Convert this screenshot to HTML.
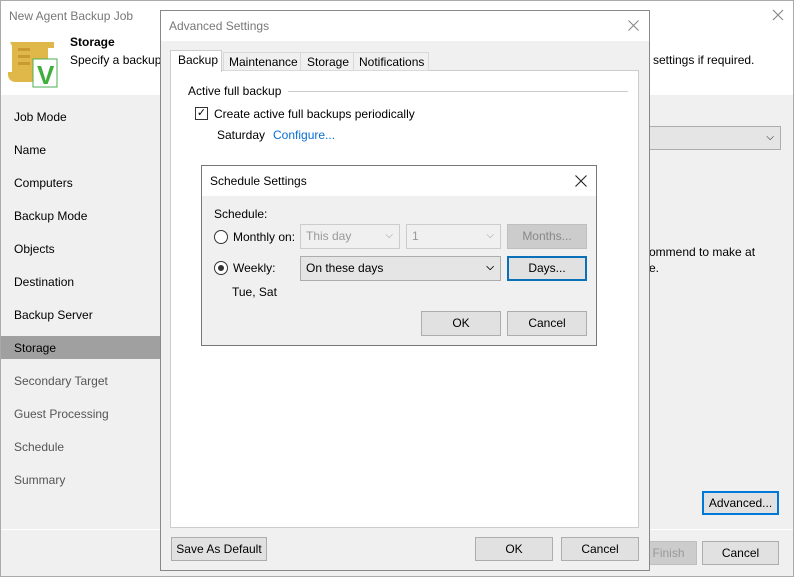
<!DOCTYPE html><html><head><style>
*{box-sizing:border-box;margin:0;padding:0}
body{width:794px;height:577px;position:relative;overflow:hidden;font-family:"Liberation Sans",sans-serif;font-size:12px;color:#000;background:#f0f0f0}
.a{position:absolute}
.btn{position:absolute;background:#e1e1e1;border:1px solid #adadad;text-align:center;line-height:22px;font-size:12px}
.nav{position:absolute;left:14px;font-size:12px}
.sel{position:absolute;border:1px solid #adadad;background:#e5e5e5;line-height:22px;padding-left:5px}
.chev{position:absolute;right:6px;top:0;font-size:10px}
</style></head><body>
<div class="a" style="left:0;top:0;width:794px;height:577px;border:1px solid #aaa"></div>
<div class="a" style="left:1px;top:1px;width:792px;height:94px;background:#fff"></div>
<div class="a" style="left:9px;top:9px;color:#777;font-size:12px">New Agent Backup Job</div>
<svg class="a" style="left:772px;top:9px" width="12" height="12"><path d="M1 1L11 11M11 1L1 11" stroke="#888" stroke-width="1.2"/></svg>
<svg class="a" style="left:4px;top:38px" width="56" height="52"><path d="M6 4h44v6h-6v34H12c-5 0-8-3-8-8v-2h4V8z" fill="#e0b84a"/><rect x="14" y="10" width="12" height="3" fill="#c99a30"/><rect x="14" y="17" width="12" height="3" fill="#c99a30"/><rect x="14" y="24" width="12" height="3" fill="#c99a30"/><rect x="29" y="21" width="24" height="28" fill="#fff" stroke="#4caf50" stroke-width="1"/><text x="33" y="46" font-family="Liberation Sans" font-weight="bold" font-size="26" fill="#3fae3a">V</text></svg>
<div class="a" style="left:70px;top:35px;font-weight:bold">Storage</div>
<div class="a" style="left:70px;top:53px">Specify a backup</div>
<div class="a" style="left:653px;top:53px">settings if required.</div>
<div class="nav" style="top:110px">Job Mode</div>
<div class="nav" style="top:143px">Name</div>
<div class="nav" style="top:176px">Computers</div>
<div class="nav" style="top:209px">Backup Mode</div>
<div class="nav" style="top:242px">Objects</div>
<div class="nav" style="top:275px">Destination</div>
<div class="nav" style="top:308px">Backup Server</div>
<div class="a" style="left:1px;top:336px;width:160px;height:23px;background:#a0a0a0"></div>
<div class="nav" style="top:341px">Storage</div>
<div class="nav" style="top:374px;color:#555">Secondary Target</div>
<div class="nav" style="top:407px;color:#555">Guest Processing</div>
<div class="nav" style="top:440px;color:#555">Schedule</div>
<div class="nav" style="top:473px;color:#555">Summary</div>
<div class="a" style="left:1px;top:529px;width:792px;height:1px;background:#fff"></div>
<div class="sel" style="left:640px;top:126px;width:141px;height:24px"><span class="chev">⌵</span></div>
<div class="a" style="left:649px;top:245px">ommend to make at</div>
<div class="a" style="left:649px;top:261px">e.</div>
<div class="btn" style="left:702px;top:491px;width:77px;height:24px;border:2px solid #0078d7;line-height:20px">Advanced...</div>
<div class="btn" style="left:640px;top:541px;width:57px;height:24px;background:#ccc;border-color:#bfbfbf;color:#999">Finish</div>
<div class="btn" style="left:702px;top:541px;width:77px;height:24px">Cancel</div>

<div class="a" style="left:160px;top:10px;width:490px;height:561px;border:1px solid #888;background:#f0f0f0"></div>
<div class="a" style="left:161px;top:11px;width:488px;height:30px;background:#fff"></div>
<div class="a" style="left:169px;top:19px;color:#777">Advanced Settings</div>
<svg class="a" style="left:628px;top:20px" width="11" height="11"><path d="M0.5 0.5L10.5 10.5M10.5 0.5L0.5 10.5" stroke="#888" stroke-width="1.1"/></svg>
<div class="a" style="left:170px;top:70px;width:469px;height:458px;background:#fff;border:1px solid #ccc"></div>
<div class="a" style="left:223px;top:52px;width:206px;height:19px;border:1px solid #d9d9d9;background:#f0f0f0"></div>
<div class="a" style="left:300px;top:52px;width:1px;height:19px;background:#d9d9d9"></div>
<div class="a" style="left:353px;top:52px;width:1px;height:19px;background:#d9d9d9"></div>
<div class="a" style="left:229px;top:55px">Maintenance</div>
<div class="a" style="left:307px;top:55px">Storage</div>
<div class="a" style="left:359px;top:55px">Notifications</div>
<div class="a" style="left:170px;top:50px;width:52px;height:22px;background:#fff;border:1px solid #ccc;border-bottom:none"></div>
<div class="a" style="left:178px;top:53px">Backup</div>
<div class="a" style="left:188px;top:84px">Active full backup</div>
<div class="a" style="left:288px;top:91px;width:340px;height:1px;background:#ccc"></div>
<div class="a" style="left:195px;top:107px;width:13px;height:13px;border:1px solid #333;font-size:11px;line-height:11px;text-align:center">✓</div>
<div class="a" style="left:214px;top:107px">Create active full backups periodically</div>
<div class="a" style="left:217px;top:128px">Saturday</div>
<div class="a" style="left:273px;top:128px;color:#0a6ed1">Configure...</div>
<div class="btn" style="left:171px;top:537px;width:96px;height:24px">Save As Default</div>
<div class="btn" style="left:475px;top:537px;width:78px;height:24px">OK</div>
<div class="btn" style="left:561px;top:537px;width:78px;height:24px">Cancel</div>

<div class="a" style="left:201px;top:165px;width:396px;height:181px;border:1px solid #777;background:#f0f0f0"></div>
<div class="a" style="left:202px;top:166px;width:394px;height:30px;background:#fff"></div>
<div class="a" style="left:210px;top:174px">Schedule Settings</div>
<svg class="a" style="left:575px;top:175px" width="12" height="12"><path d="M0.5 0.5L11.5 11.5M11.5 0.5L0.5 11.5" stroke="#222" stroke-width="1.1"/></svg>
<div class="a" style="left:214px;top:207px">Schedule:</div>
<div class="a" style="left:214px;top:230px;width:14px;height:14px;border:1px solid #333;border-radius:50%;background:#fff"></div>
<div class="a" style="left:233px;top:230px">Monthly on:</div>
<div class="sel" style="left:300px;top:224px;width:100px;height:25px;background:#f0f0f0;border-color:#ccc;color:#999">This day<span class="chev">⌵</span></div>
<div class="sel" style="left:406px;top:224px;width:95px;height:25px;background:#f0f0f0;border-color:#ccc;color:#999">1<span class="chev">⌵</span></div>
<div class="btn" style="left:507px;top:224px;width:80px;height:25px;background:#ccc;border-color:#bfbfbf;color:#888">Months...</div>
<div class="a" style="left:214px;top:261px;width:14px;height:14px;border:1px solid #333;border-radius:50%;background:#fff"><div class="a" style="left:3px;top:3px;width:6px;height:6px;border-radius:50%;background:#333"></div></div>
<div class="a" style="left:233px;top:261px">Weekly:</div>
<div class="sel" style="left:300px;top:256px;width:201px;height:25px">On these days<span class="chev" style="font-weight:bold">⌵</span></div>
<div class="btn" style="left:507px;top:256px;width:80px;height:25px;border:2px solid #0a70b8;line-height:21px">Days...</div>
<div class="a" style="left:232px;top:285px">Tue, Sat</div>
<div class="btn" style="left:421px;top:311px;width:80px;height:25px">OK</div>
<div class="btn" style="left:507px;top:311px;width:80px;height:25px">Cancel</div>
</body></html>
